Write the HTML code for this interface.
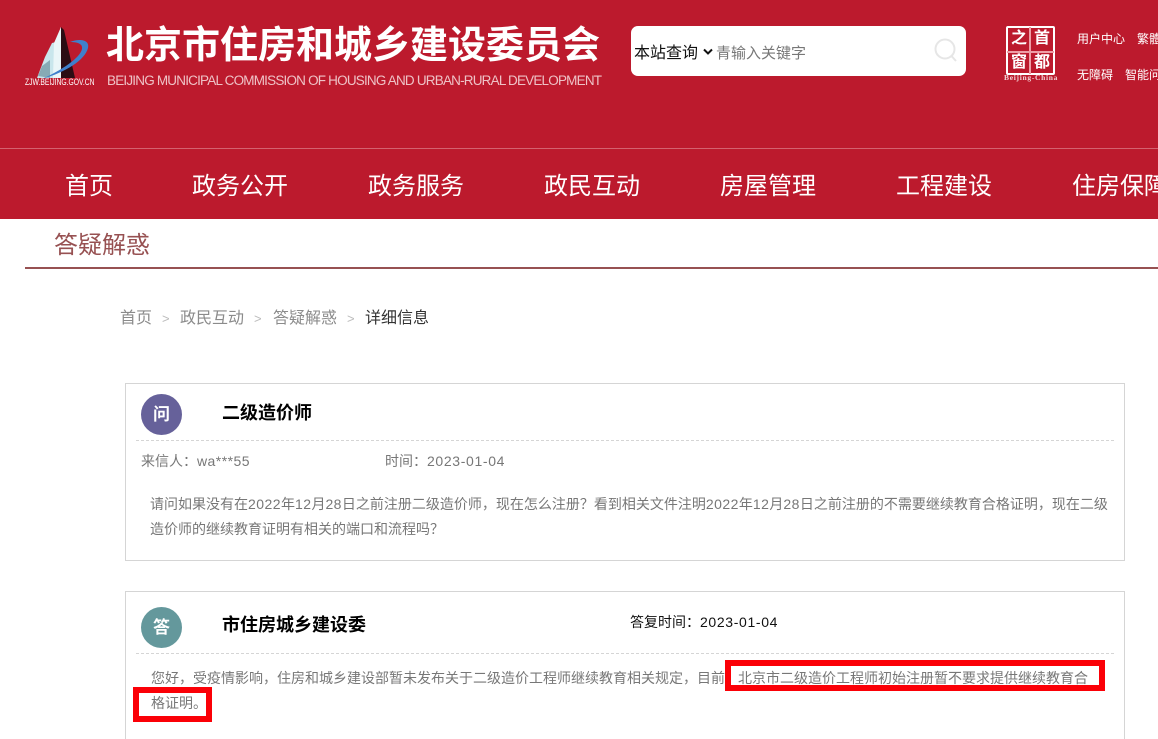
<!DOCTYPE html>
<html lang="zh-CN">
<head>
<meta charset="utf-8">
<title>答疑解惑</title>
<style>
html,body{margin:0;padding:0;background:#fff;width:1158px;height:739px;overflow:hidden;}
#w{position:relative;width:1158px;height:739px;overflow:hidden;font-family:"Liberation Sans","Noto Sans CJK SC",sans-serif;}
.a{position:absolute;white-space:nowrap;}
.hdr{left:0;top:0;width:1158px;height:219px;background:#bc1a2d;}
.line{left:0;top:148px;width:1158px;height:1px;background:#d4626f;}
.nav{top:169px;height:36px;line-height:36px;font-size:24px;color:#fff;}
.bc{top:308px;height:22px;line-height:22px;font-size:16px;color:#8b8b8b;}
.sep{top:307px;height:22px;line-height:24px;font-size:13px;color:#bbb;}
.card{border:1px solid #d5d5d5;box-sizing:border-box;}
.dash{border-top:1px dashed #d5d5d5;height:0;}
.circ{border-radius:50%;color:#fff;font-size:17px;font-weight:bold;text-align:center;width:41px;height:41px;line-height:41px;}
.h{font-size:18px;font-weight:bold;color:#000;height:26px;line-height:26px;}
.t{font-size:14px;color:#777;height:22px;line-height:22px;}
.t span{letter-spacing:.45px;}
.t span.d{letter-spacing:.65px;}
.redbox{border:6px solid #fb0007;box-sizing:border-box;}
.q{width:20px;height:20px;line-height:20px;font-size:16px;font-weight:bold;color:#fff;text-align:center;}
.s{height:16px;line-height:16px;font-size:12px;color:#fff;}
</style>
</head>
<body>
<div id="w">
<div class="a hdr"></div>
<div class="a line"></div>

<svg class="a" style="left:20px;top:20px" width="80" height="70" viewBox="20 20 80 70">
<path d="M61 27 L64 30 L75 78 L61 78Z" fill="#2b0d14"/>
<path d="M61 27 L61 78 L37 78 L40 70 L45 57 L52 43 L56 42Z" fill="#c9e6ec"/>
<path d="M61 27 L61 78 L53 78 L54 43Z" fill="#eaf6f8"/>
<path d="M38 76 L42 66 L50 60 L50 78Z" fill="#87aab5"/>
<path d="M70 42 C80 38 90 40 88 48 C85 60 66 72 42 79 C62 70 80 58 82 49 C83 44 78 42 70 42Z" fill="#3f80cc"/>
</svg>
<div class="a" style="left:25px;top:76px;height:12px;line-height:12px;font-size:9px;color:#fff;transform:scaleX(.75);transform-origin:0 50%;">ZJW.BEIJING.GOV.CN</div>

<div class="a" style="left:106px;top:19px;height:54px;line-height:54px;font-size:38px;font-weight:bold;color:#fff;">北京市住房和城乡建设委员会</div>
<div class="a" style="left:107px;top:72px;height:18px;line-height:18px;font-size:13.5px;color:#eec2c6;letter-spacing:-.8px;">BEIJING MUNICIPAL COMMISSION OF HOUSING AND URBAN-RURAL DEVELOPMENT</div>

<div class="a" style="left:631px;top:26px;width:335px;height:50px;background:#fff;border-radius:7px;"></div>
<div class="a" style="left:634px;top:43px;height:22px;line-height:22px;font-size:16px;color:#111;">本站查询</div>
<svg class="a" style="left:703px;top:48px" width="10" height="8" viewBox="0 0 10 8"><path d="M1 1.5 L5 5.5 L9 1.5" fill="none" stroke="#111" stroke-width="2"/></svg>
<div class="a" style="left:716px;top:43px;height:22px;line-height:22px;font-size:15px;color:#777;">青输入关键字</div>
<svg class="a" style="left:933px;top:38px" width="26" height="25" viewBox="0 0 26 25"><circle cx="12" cy="11" r="9.5" fill="none" stroke="#e6e6e6" stroke-width="2"/><path d="M18.5 18 L23 23" stroke="#e6e6e6" stroke-width="2"/></svg>

<div class="a" style="left:1006px;top:26px;width:49px;height:49px;border:2px solid #fff;border-radius:2px;box-sizing:border-box;"></div>
<div class="a" style="left:1007px;top:51px;width:47px;height:2px;background:#ee9ea6;"></div>
<div class="a" style="left:1029px;top:27px;width:2px;height:47px;background:#ee9ea6;"></div>
<div class="a q" style="left:1009px;top:29px;">之</div>
<div class="a q" style="left:1032px;top:29px;">首</div>
<div class="a q" style="left:1009px;top:53px;">窗</div>
<div class="a q" style="left:1032px;top:53px;">都</div>
<div class="a" style="left:1004px;top:73px;height:10px;line-height:10px;font-size:7.5px;font-weight:bold;color:#f3d4d7;font-family:'Liberation Serif',serif;letter-spacing:.7px;">Beijing-China</div>

<div class="a s" style="left:1077px;top:31px;">用户中心</div>
<div class="a s" style="left:1137px;top:31px;">繁體</div>
<div class="a s" style="left:1077px;top:67px;">无障碍</div>
<div class="a s" style="left:1125px;top:67px;">智能问答</div>

<div class="a nav" style="left:65px;">首页</div>
<div class="a nav" style="left:192px;">政务公开</div>
<div class="a nav" style="left:368px;">政务服务</div>
<div class="a nav" style="left:544px;">政民互动</div>
<div class="a nav" style="left:720px;">房屋管理</div>
<div class="a nav" style="left:896px;">工程建设</div>
<div class="a nav" style="left:1072px;">住房保障</div>

<div class="a" style="left:54px;top:229px;height:34px;line-height:34px;font-size:24px;color:#975152;">答疑解惑</div>
<div class="a" style="left:25px;top:267px;width:1133px;height:2px;background:#975152;"></div>

<div class="a bc" style="left:120px;">首页</div>
<div class="a sep" style="left:162px;">&gt;</div>
<div class="a bc" style="left:180px;">政民互动</div>
<div class="a sep" style="left:254px;">&gt;</div>
<div class="a bc" style="left:273px;">答疑解惑</div>
<div class="a sep" style="left:347px;">&gt;</div>
<div class="a bc" style="left:365px;color:#333;">详细信息</div>

<div class="a card" style="left:125px;top:383px;width:1000px;height:178px;"></div>
<div class="a circ" style="left:141px;top:394px;background:#66619a;">问</div>
<div class="a h" style="left:222px;top:400px;">二级造价师</div>
<div class="a dash" style="left:136px;top:440px;width:978px;"></div>
<div class="a t" style="left:141px;top:450px;">来信人：<span>wa***55</span></div>
<div class="a t" style="left:385px;top:450px;">时间：<span class="d">2023-01-04</span></div>
<div class="a t" style="left:150px;top:493px;">请问如果没有在<span>2022</span>年<span>12</span>月<span>28</span>日之前注册二级造价师，现在怎么注册？看到相关文件注明<span>2022</span>年<span>12</span>月<span>28</span>日之前注册的不需要继续教育合格证明，现在二级</div>
<div class="a t" style="left:150px;top:518px;">造价师的继续教育证明有相关的端口和流程吗？</div>

<div class="a card" style="left:125px;top:591px;width:1000px;height:170px;"></div>
<div class="a circ" style="left:141px;top:607px;background:#64989c;">答</div>
<div class="a h" style="left:222px;top:612px;">市住房城乡建设委</div>
<div class="a t" style="left:630px;top:611px;color:#111;">答复时间：<span class="d">2023-01-04</span></div>
<div class="a dash" style="left:136px;top:653px;width:978px;"></div>
<div class="a t" style="left:151px;top:667px;">您好，受疫情影响，住房和城乡建设部暂未发布关于二级造价工程师继续教育相关规定，目前</div>
<div class="a t" style="left:738px;top:667px;">北京市二级造价工程师初始注册暂不要求提供继续教育合</div>
<div class="a t" style="left:151px;top:692px;">格证明。</div>
<div class="a redbox" style="left:725px;top:660px;width:380px;height:31px;"></div>
<div class="a redbox" style="left:133px;top:687px;width:79px;height:35px;"></div>
</div>
</body>
</html>
